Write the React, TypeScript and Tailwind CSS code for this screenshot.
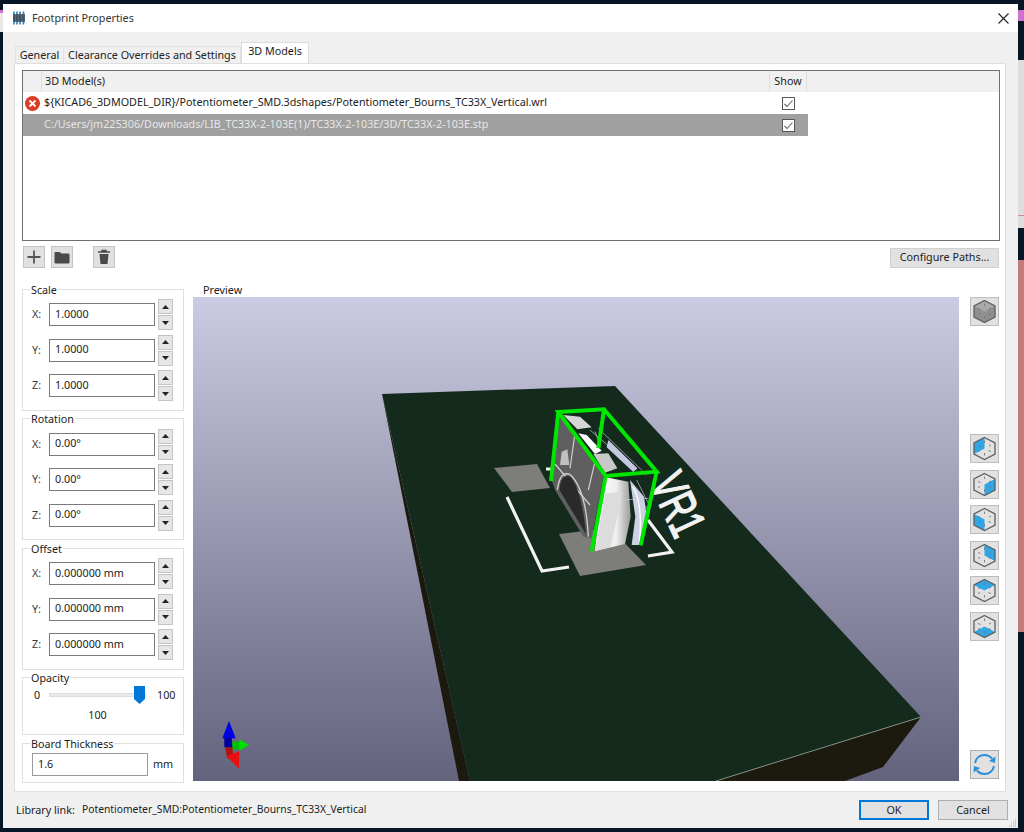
import React from "react";

const T = [14.5, 3.5], UR = [25, 9], LR = [25, 20], B = [14.5, 25.5], LL = [4, 20], UL = [4, 9], C = [14.5, 14.5];
const pts = (a: number[][]) => a.map((p) => p.join(",")).join(" ");

function Cube({ face, solid }: { face?: number[][]; solid?: boolean }) {
  return (
    <button className="flex h-[29px] w-[29px] items-center justify-center border border-[#bdbdbd] bg-[#e1e1e1]">
      <svg width="27" height="27" viewBox="1 1 27 27" className="shrink-0">
        {solid && <polygon points={pts([T, UR, LR, B, LL, UL])} fill="#8f8f8f" />}
        {solid && <polygon points={pts([T, UR, C, UL])} fill="#a9a9a9" />}
        {face && <polygon points={pts(face)} fill="#2ea6ea" />}
        <polygon points={pts([T, UR, LR, B, LL, UL])} fill="none" stroke="#5f5f5f" strokeWidth="1.3" />
        <path d="M14.500 6.500v2.500M14.500 19v2.500M8 17.500l2-1M19 12l2-1M8 11.500l2.500 1M18.500 16.500l2.500 1" stroke="#777" strokeWidth="0.9" fill="none" />
      </svg>
    </button>
  );
}

function Refresh() {
  return (
    <button className="flex h-[29px] w-[29px] items-center justify-center border border-[#adadad] bg-[#e1e1e1]">
      <svg width="27" height="27" viewBox="1 1 27 27" className="shrink-0">
        <path d="M5 13C6 8 10 5 14.500 5c3 0 5.500 1.200 7.500 3.500" stroke="#2a8fd8" strokeWidth="2" fill="none" />
        <polygon points="25.500,6.500 25,13 19,11" fill="#2a8fd8" />
        <path d="M24 16c-1 5-5 8-9.500 8-3 0-5.500-1.200-7.500-3.500" stroke="#2a8fd8" strokeWidth="2" fill="none" />
        <polygon points="3.500,22.500 4,16 10,18" fill="#2a8fd8" />
      </svg>
    </button>
  );
}

function Spinner() {
  return (
    <div className="ml-[3px] flex w-[15px] flex-col gap-px">
      <div className="flex h-[15px] items-center justify-center border border-[#c4c4c4] bg-[#e6e6e6]">
        <svg width="7" height="4" viewBox="0 0 7 4"><polygon points="3.500,0 7,4 0,4" fill="#222" /></svg>
      </div>
      <div className="flex h-[15px] items-center justify-center border border-[#c4c4c4] bg-[#e6e6e6]">
        <svg width="7" height="4" viewBox="0 0 7 4"><polygon points="0,0 7,0 3.500,4" fill="#222" /></svg>
      </div>
    </div>
  );
}

function Field({ label, value }: { label: string; value: string }) {
  return (
    <div className="flex h-[31px] items-center">
      <span className="w-[17px] text-[#3a3a3a]">{label}</span>
      <div className="flex h-[23px] w-[106px] items-center border border-[#7a7a7a] bg-white pb-[1px] pl-[5px] text-[#222]">{value}</div>
      <Spinner />
    </div>
  );
}

function Group({ title, className, children }: { title: string; className: string; children: React.ReactNode }) {
  return (
    <div className={"relative w-[162px] border border-[#dfdfdf] bg-white pl-[9px] " + className}>
      <span className="absolute -top-[7px] left-[7px] bg-white px-[1px] leading-[15px] text-[#222]">{title}</span>
      {children}
    </div>
  );
}

function Triple({ values, className }: { values: string[]; className: string }) {
  return (
    <div className={"flex flex-col gap-[4.5px] " + className}>
      <Field label="X:" value={values[0]} />
      <Field label="Y:" value={values[1]} />
      <Field label="Z:" value={values[2]} />
    </div>
  );
}

function Check() {
  return (
    <div className="flex h-[13px] w-[13px] items-center justify-center border border-[#555] bg-white">
      <svg width="11" height="11" viewBox="0 0 11 11"><path d="M1.500 6l2.500 2.500L9.500 2.500" stroke="#666" strokeWidth="1.100" fill="none" /></svg>
    </div>
  );
}

function Scene() {
  return (
    <svg viewBox="193 297 766 484" className="block h-[484px] w-[766px]">
      <defs>
        <linearGradient id="front" x1="0" y1="0" x2="1" y2="0">
          <stop offset="0" stopColor="#ffffff" />
          <stop offset="0.6" stopColor="#eeeeee" />
          <stop offset="1" stopColor="#9a9a9a" />
        </linearGradient>
      </defs>
      <polygon points="382,394 459,781 470,781" fill="#1c1a0e" />
      <polygon points="921,717 883,767 845,781 716,781" fill="#1c1a0e" />
      <polygon points="382,394 615,386 921,717 716,781 470,781" fill="#142a1d" />
      <line x1="921" y1="717" x2="716" y2="781" stroke="#9aa79c" strokeWidth="0.8" />
      <polygon points="494,468 537,464 550,488 512,492" fill="#7d7d79" />
      <polygon points="559,534 610,528 646,565 580,576" fill="#7d7d79" />
      <path d="M507 497L542 571L569 567M648 520L672 552L648 556M546 469h5" stroke="#f2f2f2" strokeWidth="3.200" fill="none" />
      <text transform="translate(649,483) rotate(65) scale(0.65,1)" fontFamily="'Liberation Sans', sans-serif" fontSize="50" fill="#f2f2f2" stroke="#f2f2f2" strokeWidth="1.600">VR1</text>
      <g transform="translate(480 390) scale(0.33333)">
        <polygon points="240,75 372,250 335,445 310,440 225,300 215,270" fill="#5f5f5f" />
        <path d="M225 222L330 345M285 130L270 235M345 215L325 300" stroke="#d0d0d0" strokeWidth="3.500" fill="none" />
        <path d="M238 300Q245 245 272 262Q305 300 318 432Z" fill="#2a2a2a" />
        <path d="M232 300Q240 238 272 255Q318 300 325 440" stroke="#cfcfcf" strokeWidth="4" fill="none" />
        <polygon points="245,185 262,178 268,225 240,225" fill="#c0c0c0" />
        <polygon points="250,75 300,80 335,112 292,118" fill="#d6d6d6" />
        <polygon points="295,130 320,135 365,182 345,192" fill="#ffffff" />
        <polygon points="340,192 385,190 412,235 375,248" fill="#c8c8c8" />
        <polygon points="378,262 445,275 452,380 435,462 345,483 358,370" fill="url(#front)" />
        <polygon points="345,483 376,310 428,305 392,470" fill="#dcdcdc" />
        <polygon points="450,270 492,320 502,390 482,465 455,465 466,380" fill="#ced1e6" />
        <polygon points="385,150 472,235 460,246 380,172" fill="#c3c7e0" />
        <path d="M330 120L470 240M355 115L500 255M345 125L360 165M470 270L510 350M480 330L505 360M430 330L505 325" stroke="#c9cce0" strokeWidth="2" fill="none" />
        <path d="M458 290Q490 340 478 460" stroke="#ffffff" strokeWidth="4" fill="none" />
        <path d="M235 66L372 58L530 245L377 258ZM377 258L335 484M530 245L482 466M235 66L213 273M372 58L355 175" stroke="#00e600" strokeWidth="12" fill="none" strokeLinejoin="miter" />
      </g>
      <g transform="translate(0 660) scale(0.33333)">
        <polygon points="690,248 722,242 722,268 690,270" fill="#00c000" />
        <polygon points="718,238 748,255 718,272" fill="#00e000" />
        <polygon points="673,232 695,232 697,265 673,262" fill="#0000a0" />
        <polygon points="687,183 707,235 667,235" fill="#0000e0" />
        <polygon points="675,262 697,262 700,290 682,295" fill="#b01010" />
        <polygon points="678,288 718,274 717,326" fill="#e81010" />
      </g>
    </svg>
  );
}

export default function App() {
  return (
    <div
      className="flex h-[832px] w-[1024px] overflow-hidden bg-[#071626] text-[10.75px] text-[#222]"
      style={{ fontFamily: "'Noto Sans', sans-serif" }}
    >
      <div className="flex w-[3px] flex-col pt-[10px]">
        <div className="h-[3px] bg-[#d070d0]" />
        <div className="h-[19px] bg-[#e8e8e8]" />
      </div>

      <div className="mt-[4px] flex h-[824px] w-[1015px] flex-col bg-[#f0f0f0]">
        <div className="flex h-[28px] shrink-0 items-center bg-white pl-[9px] pr-[9px]">
          <svg width="14" height="14" viewBox="0 0 14 14" className="mr-[6px]">
            <rect x="1" y="3" width="12" height="8" fill="#5b6a75" />
            <path d="M2 0.500v13M5 0.500v13M8 0.500v13M11.500 0.500v13" stroke="#2f7fb5" strokeWidth="1.600" />
            <path d="M2 3.500v7M5 3.500v7M8 3.500v7M11.500 3.500v7" stroke="#40505c" strokeWidth="1.800" />
          </svg>
          <span className="text-[#333]">Footprint Properties</span>
          <svg width="11" height="11" viewBox="0 0 11 11" className="ml-auto"><path d="M0.500 0.500l10 10M10.500 0.500l-10 10" stroke="#222" strokeWidth="1.100" /></svg>
        </div>

        <div className="flex h-[31px] shrink-0 items-end pl-[12px] whitespace-nowrap">
          <div className="flex h-[17px] w-[49px] items-center justify-center border border-b-0 border-[#e2e2e2] bg-[#f0f0f0]">General</div>
          <div className="flex h-[17px] w-[177px] items-center justify-center border border-b-0 border-l-0 border-[#e2e2e2] bg-[#f0f0f0]">Clearance Overrides and Settings</div>
          <div className="flex h-[21px] w-[68px] items-center justify-center border border-b-0 border-[#dcdcdc] bg-white pb-[3px]">3D Models</div>
        </div>

        <div className="ml-[11px] flex h-[729px] w-[992px] shrink-0 flex-col border border-[#dfdfdf] bg-white pl-[7px] pt-[6px]">
          <div className="h-[171px] w-[978px] border border-[#707070] bg-white">
            <div className="flex h-[21px] bg-[#f0f0f0]">
              <div className="w-[19px] border-r border-[#dcdcdc]" />
              <div className="flex w-[728px] items-center border-r border-[#dcdcdc] pl-[3px]">3D Model(s)</div>
              <div className="flex w-[37px] items-center justify-center border-r border-[#dcdcdc]">Show</div>
            </div>
            <div className="flex h-[22px] w-[785px] items-center">
              <svg width="15" height="15" viewBox="0 0 15 15" className="ml-[2px] mr-[4px] shrink-0">
                <circle cx="7.500" cy="7.500" r="7.500" fill="#dc3b24" />
                <path d="M4.500 4.500l6 6M10.500 4.500l-6 6" stroke="#fff" strokeWidth="1.800" />
              </svg>
              <span className="w-[738px] shrink-0 pb-[2px] whitespace-nowrap">{"${KICAD6_3DMODEL_DIR}/Potentiometer_SMD.3dshapes/Potentiometer_Bourns_TC33X_Vertical.wrl"}</span>
              <Check />
            </div>
            <div className="flex h-[22px] w-[785px] items-center bg-[#a0a0a0] pl-[21px]">
              <span className="w-[738px] shrink-0 pb-[2px] whitespace-nowrap text-[#e6e6e6]">C:/Users/jm225306/Downloads/LIB_TC33X-2-103E(1)/TC33X-2-103E/3D/TC33X-2-103E.stp</span>
              <Check />
            </div>
          </div>

          <div className="mt-[5px] flex h-[22px] w-[978px] items-center pl-[1px]">
            <button className="flex h-[22px] w-[22px] items-center justify-center border border-[#c4c4c4] bg-[#e1e1e1]">
              <svg width="16" height="16" viewBox="0 0 16 16"><path d="M8 1.500v13M1.500 8h13" stroke="#555" strokeWidth="1.800" /></svg>
            </button>
            <button className="ml-[6px] flex h-[22px] w-[22px] items-center justify-center border border-[#c4c4c4] bg-[#e1e1e1]">
              <svg width="16" height="14" viewBox="0 0 16 14"><path d="M1 2.500h5l1.500 1.500H15v9H1z" fill="#4a4a4a" stroke="#4a4a4a" strokeLinejoin="round" /></svg>
            </button>
            <button className="ml-[20px] flex h-[22px] w-[22px] items-center justify-center border border-[#c4c4c4] bg-[#e1e1e1]">
              <svg width="14" height="16" viewBox="0 0 14 16"><path d="M1 3h12M5 3V1.500h4V3" stroke="#4a4a4a" strokeWidth="1.400" fill="none" /><path d="M2.500 5h9l-1 10h-7z" fill="#4a4a4a" /></svg>
            </button>
            <button className="ml-auto mt-[1px] mr-[1px] h-[20px] w-[109px] border border-[#d0d0d0] bg-[#e1e1e1]">Configure Paths...</button>
          </div>

          <div className="mt-[14px] flex items-start">
            <div className="flex flex-col pt-[7px]">
              <Group title="Scale" className="h-[122px]"><Triple className="pt-[9px]" values={["1.0000", "1.0000", "1.0000"]} /></Group>
              <Group title="Rotation" className="mt-[7px] h-[122px]"><Triple className="pt-[9.500px]" values={["0.00°", "0.00°", "0.00°"]} /></Group>
              <Group title="Offset" className="mt-[8px] h-[122px]"><Triple className="pt-[9px]" values={["0.000000 mm", "0.000000 mm", "0.000000 mm"]} /></Group>
              <Group title="Opacity" className="mt-[7px] h-[58px]">
                <div className="flex h-[24px] items-center pt-[10px]">
                  <span className="w-[17px] pl-[2px]">0</span>
                  <div className="relative h-[4px] w-[97px] border border-[#dcdcdc] bg-[#e7eaea]">
                    <svg width="11" height="18" viewBox="0 0 11 18" className="absolute -top-[8px] right-0"><polygon points="0,0 11,0 11,13 5.500,18 0,13" fill="#0078d7" /></svg>
                  </div>
                  <span className="ml-[11px]">100</span>
                </div>
                <div className="mt-[5px] w-[130px] pl-[1px] text-center">100</div>
              </Group>
              <Group title="Board Thickness" className="mt-[8px] h-[40px]">
                <div className="flex h-[38px] items-center pt-[2px]">
                  <div className="flex h-[23px] w-[116px] items-center border border-[#9a9a9a] bg-white pl-[5px]">1.6</div>
                  <span className="ml-[5px]">mm</span>
                </div>
              </Group>
            </div>

            <div className="ml-[9px] flex w-[766px] flex-col">
              <div className="h-[15px] pl-[10px] leading-[16px] text-[#222]">Preview</div>
              <div className="h-[484px] w-[766px] bg-linear-to-b from-[#cbcbe3] to-[#63637d]">
                <Scene />
              </div>
            </div>

            <div className="ml-[11px] mt-[15px] flex h-[482px] flex-col">
              <Cube solid />
              <div className="mt-[108px] flex flex-col gap-[6.500px]">
                <Cube face={[T, UL, LL, C]} />
                <Cube face={[UR, LR, B, C]} />
                <Cube face={[UL, C, B, LL]} />
                <Cube face={[T, UR, LR, C]} />
                <Cube face={[T, UR, C, UL]} />
                <Cube face={[C, LR, B, LL]} />
              </div>
              <div className="mt-auto"><Refresh /></div>
            </div>
          </div>
        </div>

        <div className="relative flex flex-1 items-center pl-[13px] pr-[10px]">
          <span className="w-[66px]">Library link:</span>
          <span className="text-[10.3px]">Potentiometer_SMD:Potentiometer_Bourns_TC33X_Vertical</span>
          <button className="ml-auto h-[20px] w-[70px] border-2 border-[#0078d7] bg-[#e1e1e1]">OK</button>
          <button className="ml-[9px] h-[20px] w-[70px] border border-[#adadad] bg-[#e1e1e1]">Cancel</button>
          <svg width="8" height="8" viewBox="0 0 8 8" className="absolute bottom-[1px] right-[1px]">
            <path d="M6 1h1M4 3h1M6 3h1M2 5h1M4 5h1M6 5h1M0 7h1M2 7h1M4 7h1M6 7h1" stroke="#a8a8a8" strokeWidth="1" />
          </svg>
        </div>
      </div>

      <div className="flex w-[6px] flex-col">
        <div className="mt-[10px] h-[11px] bg-[#d070d0]" />
        <div className="mt-[39px] h-[155px] bg-[#dddddd]" />
        <div className="h-px bg-[#d08a8a]" />
        <div className="h-[12px] bg-[#dddddd]" />
        <div className="mt-[32px] h-[372px] bg-[#c47b7b]" />
      </div>
    </div>
  );
}
